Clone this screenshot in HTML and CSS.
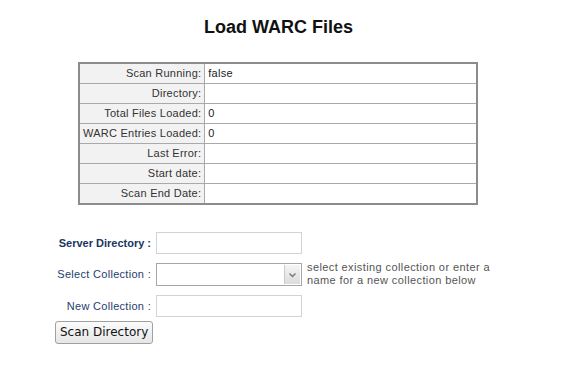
FILE: index.html
```html
<!DOCTYPE html>
<html>
<head>
<meta charset="utf-8">
<link rel="stylesheet" href="styles.css">
</head>
<body>
<div class="page">
  <h1 class="title">Load WARC Files</h1>
  <table class="status">
    <tr><th>Scan Running:</th><td>false</td></tr>
    <tr><th>Directory:</th><td></td></tr>
    <tr><th>Total Files Loaded:</th><td>0</td></tr>
    <tr><th>WARC Entries Loaded:</th><td>0</td></tr>
    <tr><th>Last Error:</th><td></td></tr>
    <tr><th>Start date:</th><td></td></tr>
    <tr><th>Scan End Date:</th><td></td></tr>
  </table>
  <form class="form">
    <div class="row">
      <label class="lbl strong">Server Directory :</label>
      <input class="field" type="text">
    </div>
    <div class="row">
      <label class="lbl">Select Collection :</label>
      <div class="select"><span class="arrow"><svg width="9" height="6" viewBox="0 0 9 6"><path d="M1.5 1.5 L4.5 4.5 L7.5 1.5" fill="none" stroke="#777" stroke-width="1.4"/></svg></span></div>
      <div class="help">select existing collection or enter a<br>name for a new collection below</div>
    </div>
    <div class="row">
      <label class="lbl">New Collection :</label>
      <input class="field" type="text">
    </div>
    <button class="btn" type="button">Scan Directory</button>
  </form>
</div>
</body>
</html>
```
FILE: styles.css
```css
html, body { margin: 0; padding: 0; background: #fff; }
body { font-family: "Liberation Sans", Arial, sans-serif; }
.page { width: 541px; margin: 0 8px; padding-top: 15px; }
.title {
  margin: 0 0 23px 0;
  text-align: center;
  font-size: 18px;
  font-weight: bold;
  line-height: 24px;
  color: #111;
}
.status {
  margin: 0 auto 0 70px;
  width: 400px;
  border-collapse: collapse;
  border: 2px solid #8c8c8c;
  font-size: 11px;
  letter-spacing: 0.25px;
  color: #222;
}
.status th, .status td {
  border: 1px solid #a9a9ac;
  height: 19px;
  padding: 0 3px;
  line-height: 19px;
}
.status th {
  width: 118px;
  background: #f2f2f2;
  text-align: right;
  font-weight: normal;
  color: #333;
  white-space: nowrap;
}
.status td { background: #fff; }
.form {
  margin-top: 27px;
  padding-left: 46px;
  font-size: 11px;
  letter-spacing: 0.3px;
}
.row {
  display: flex;
  align-items: flex-start;
  margin-bottom: 9px;
}
.lbl {
  width: 97px;
  text-align: right;
  color: #1f3d6d;
  line-height: 22px;
  padding-right: 5px;
  white-space: nowrap;
}
.lbl.strong { font-weight: bold; color: #1a3560; letter-spacing: 0; }
.field {
  box-sizing: border-box;
  width: 146px;
  height: 22px;
  margin: 0;
  border: 1px solid #d0d4d8;
  background: #fff;
  padding: 0;
}
.select {
  box-sizing: border-box;
  width: 146px;
  height: 23px;
  border: 1px solid #a6a6a6;
  background: #fff;
  display: flex;
  justify-content: flex-end;
  padding: 1px;
}
.arrow {
  width: 15px;
  display: flex;
  align-items: center;
  justify-content: center;
  background: linear-gradient(#f4f4f4, #dcdcdc);
  border-left: 1px solid #c8c8c8;
}
.help {
  margin-left: 5px;
  color: #555;
  line-height: 13px;
  margin-top: -2px;
  letter-spacing: 0.4px;
}
.row:nth-child(2) { margin-bottom: 8px; }
.btn {
  margin: -7px 0 0 1px;
  font-family: "DejaVu Sans", sans-serif;
  font-size: 12px;
  letter-spacing: 0;
  height: 23px;
  padding: 0 4px;
  border: 1px solid #a0a0a0;
  border-radius: 3px;
  background: linear-gradient(#fbfbfb, #e6e6e6);
  color: #111;
}
```
